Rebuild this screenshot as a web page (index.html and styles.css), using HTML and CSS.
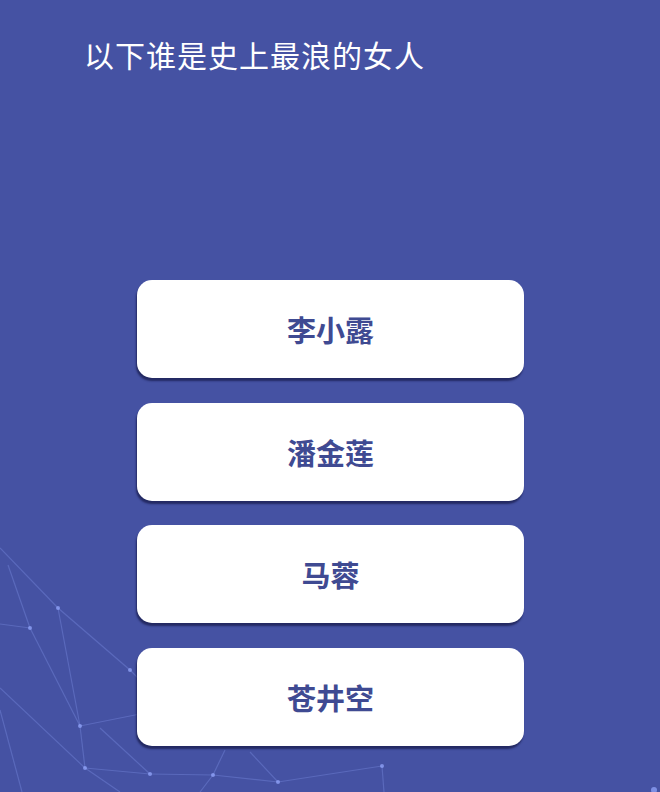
FILE: index.html
```html
<!DOCTYPE html>
<html lang="zh">
<head>
<meta charset="utf-8">
<title>以下谁是史上最浪的女人</title>
<link rel="stylesheet" href="styles.css">
</head>
<body>
<div class="page">
  <svg class="net" width="660" height="792" viewBox="0 0 660 792" aria-hidden="true">
    <g class="lines">
      <line x1="0" y1="548" x2="58" y2="608"/>
      <line x1="58" y1="608" x2="130" y2="670"/>
      <line x1="130" y1="670" x2="140" y2="680"/>
      <line x1="8" y1="565" x2="30" y2="628"/>
      <line x1="0" y1="624" x2="30" y2="628"/>
      <line x1="30" y1="628" x2="80" y2="726"/>
      <line x1="58" y1="608" x2="80" y2="726"/>
      <line x1="80" y1="726" x2="85" y2="768"/>
      <line x1="80" y1="726" x2="140" y2="714"/>
      <line x1="0" y1="688" x2="85" y2="768"/>
      <line x1="0" y1="710" x2="22" y2="792"/>
      <line x1="85" y1="768" x2="150" y2="774"/>
      <line x1="85" y1="768" x2="120" y2="792"/>
      <line x1="150" y1="774" x2="213" y2="775"/>
      <line x1="213" y1="775" x2="278" y2="782"/>
      <line x1="278" y1="782" x2="382" y2="766"/>
      <line x1="100" y1="728" x2="150" y2="774"/>
      <line x1="225" y1="750" x2="213" y2="775"/>
      <line x1="250" y1="752" x2="278" y2="782"/>
      <line x1="382" y1="766" x2="384" y2="792"/>
      <line x1="213" y1="775" x2="200" y2="792"/>
    </g>
    <g class="dots">
      <circle cx="58" cy="608" r="2"/>
      <circle cx="30" cy="628" r="2"/>
      <circle cx="130" cy="670" r="2"/>
      <circle cx="80" cy="726" r="2"/>
      <circle cx="85" cy="768" r="2"/>
      <circle cx="150" cy="774" r="2"/>
      <circle cx="213" cy="775" r="2"/>
      <circle cx="278" cy="782" r="2"/>
      <circle cx="382" cy="766" r="2"/>
      <circle cx="654" cy="790" r="3"/>
    </g>
  </svg>
  <h1 class="question">以下谁是史上最浪的女人</h1>
  <div class="options">
    <button class="option">李小露</button>
    <button class="option">潘金莲</button>
    <button class="option">马蓉</button>
    <button class="option">苍井空</button>
  </div>
</div>
</body>
</html>
```

FILE: styles.css
```css
html, body {
  margin: 0;
  padding: 0;
}

body {
  background: #4552a3;
  font-family: "Noto Sans CJK SC", "Noto Sans", sans-serif;
}

.page {
  position: relative;
  width: 660px;
  height: 792px;
  overflow: hidden;
  background: #4552a3;
}

.net {
  position: absolute;
  left: 0;
  top: 0;
  z-index: 0;
  pointer-events: none;
}

.net .lines line {
  stroke: rgba(140, 160, 245, 0.3);
  stroke-width: 1.2;
}

.net .dots circle {
  fill: rgba(150, 170, 255, 0.7);
}

.question {
  position: relative;
  z-index: 1;
  margin: 0;
  padding: 34px 0 0 84px;
  font-size: 30px;
  line-height: 40px;
  font-weight: 400;
  letter-spacing: 1px;
  color: #ffffff;
}

.options {
  position: relative;
  z-index: 1;
  display: flex;
  flex-direction: column;
  gap: 24.7px;
  width: 387px;
  margin: 206px 0 0 137px;
}

.option {
  display: flex;
  align-items: center;
  justify-content: center;
  height: 98px;
  padding: 0;
  border: none;
  border-radius: 15px;
  background: #ffffff;
  box-shadow: -1px 3px 2px rgba(24, 28, 78, 0.75);
  font-family: "Noto Sans CJK SC", "Noto Sans", sans-serif;
  font-size: 29px;
  font-weight: 700;
  color: #3f4a92;
}
```
